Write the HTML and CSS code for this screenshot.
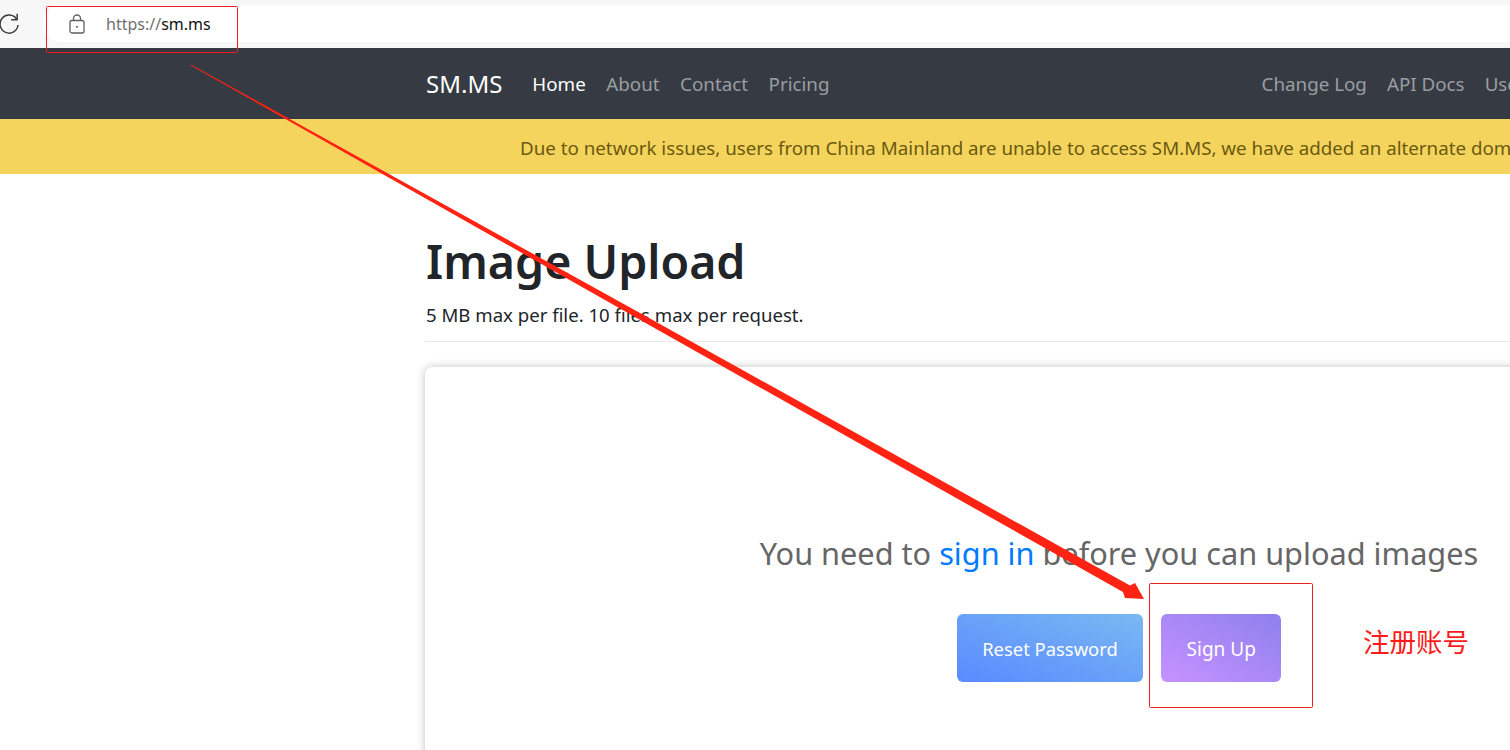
FILE: index.html
```html
<!DOCTYPE html>
<html lang="en">
<head>
  <meta charset="UTF-8" />
  <title>SM.MS - Image Upload</title>
  <link rel="stylesheet" href="styles.css">
</head>
<body>
  <div class="toolbar">
    <svg class="reload" width="22" height="22" viewBox="0 0 22 22" fill="none" stroke="#3c3c3c" stroke-width="1.5">
      <path d="M17.6 7.2A9 9 0 1 0 19 13" />
      <path d="M18.2 1.8v6h-6" stroke-linejoin="round" />
    </svg>
    <div class="address">
      <svg class="lock" width="16" height="20" viewBox="0 0 16 20" fill="none" stroke="#5f5f5f" stroke-width="1.3">
        <rect x="1" y="6.5" width="14" height="12.5" rx="2" />
        <path d="M4.5 6.5V4.5a3.5 3.5 0 0 1 7 0v2" />
        <circle cx="8" cy="12.8" r="1" fill="#5f5f5f" stroke="none" />
      </svg>
      <span class="url"><span class="scheme">https://</span>sm.ms</span>
    </div>
  </div>

  <nav class="navbar">
    <a class="brand" href="#">SM.MS</a>
    <ul class="nav-left">
      <li><a class="active" href="#">Home</a></li>
      <li><a href="#">About</a></li>
      <li><a href="#">Contact</a></li>
      <li><a href="#">Pricing</a></li>
    </ul>
    <ul class="nav-right">
      <li><a href="#">Change Log</a></li>
      <li><a href="#">API Docs</a></li>
      <li><a href="#">User</a></li>
    </ul>
  </nav>

  <div class="notice">Due to network issues, users from China Mainland are unable to access SM.MS, we have added an alternate domain.</div>

  <main class="content">
    <h1>Image Upload</h1>
    <p class="lead">5 MB max per file. 10 files max per request.</p>
    <hr />
    <section class="card">
      <div class="login-tip">You need to <a href="#">sign in</a> before you can upload images</div>
      <div class="actions">
        <a class="btn btn-reset" href="#">Reset Password</a>
        <a class="btn btn-signup" href="#">Sign Up</a>
        <span class="note">注册账号</span>
      </div>
    </section>
  </main>

  <svg class="markup" width="1510" height="750" viewBox="0 0 1510 750">
    <rect x="46.5" y="6.5" width="191" height="46" rx="1" fill="none" stroke="#f01f1f" />
    <rect x="1149.5" y="583.5" width="163" height="124" rx="1" fill="none" stroke="#e8201f" />
    <polygon points="191,64.5 650,318.5 1130,585.5 1135,583 1144,599 1125,598 1123,592 650,325.5 191,65.5" fill="#ff2313" />
  </svg>
</body>
</html>
```

FILE: styles.css
```css
html, body {
  margin: 0;
  height: 750px;
  overflow: hidden;
  background: #fff;
}

body {
  position: relative;
  font-family: "Noto Sans", "Noto Sans CJK SC", sans-serif;
  color: #212529;
}

a {
  text-decoration: none;
}

ul {
  list-style: none;
  margin: 0;
  padding: 0;
}

.toolbar {
  display: flex;
  height: 48px;
  padding-top: 5px;
  box-sizing: border-box;
  background: #f7f7f7;
}

.reload {
  flex: none;
  margin: 7px 0 0 -1px;
}

.address {
  flex: 1;
  display: flex;
  align-items: center;
  height: 37px;
  margin-left: 22px;
  background: #fff;
  border-radius: 18px 0 0 18px;
}

.lock {
  margin-left: 26px;
}

.url {
  margin-left: 21px;
  font-size: 16px;
  color: #111;
}

.scheme {
  color: #6f6f6f;
}

.navbar {
  display: flex;
  align-items: center;
  height: 71px;
  padding-left: 426px;
  background: #363b43;
  white-space: nowrap;
}

.brand {
  font-size: 24px;
  color: #fff;
}

.nav-left, .nav-right {
  display: flex;
  gap: 20px;
  font-size: 18.8px;
}

.nav-left {
  gap: 20.5px;
  margin-left: 30px;
}

.nav-right {
  margin-left: 432px;
}

.navbar li a {
  color: #9a9da1;
}

.navbar li a.active {
  color: #fff;
}

.notice {
  height: 55px;
  padding-left: 520px;
  line-height: 58px;
  font-size: 18.75px;
  color: #6b5a10;
  background: #f4d45c;
  white-space: nowrap;
}

.content {
  width: 1388px;
  margin-left: 425px;
}

h1 {
  margin: 56px 0 0 1px;
  font-size: 46.5px;
  line-height: 62px;
  font-weight: 600;
}

.lead {
  margin: 10px 0 0 1px;
  font-size: 18.6px;
  line-height: 26px;
}

hr {
  margin: 13px 0 0;
  border: 0;
  border-top: 1px solid #e8e8e8;
}

.card {
  height: 500px;
  margin-top: 25px;
  padding-top: 165px;
  box-sizing: border-box;
  background: #fff;
  border-radius: 8px;
  box-shadow: 0 0 8px rgba(0, 0, 0, 0.25);
  text-align: center;
}

.login-tip {
  font-size: 30.7px;
  line-height: 42px;
  color: #666;
}

.login-tip a {
  color: #007bff;
}

.actions {
  position: relative;
  display: flex;
  justify-content: center;
  gap: 18px;
  margin-top: 40px;
}

.btn {
  display: flex;
  align-items: center;
  height: 68px;
  padding: 0 25.4px;
  box-sizing: border-box;
  border-radius: 6px;
  font-size: 19px;
  color: #fff;
}

.btn-reset {
  font-size: 18.4px;
  background: linear-gradient(to top right, #5a8aff, #7ab8f2);
}

.btn-signup {
  padding-top: 2px;
  background: linear-gradient(to top right, #c792ff, #8d80ee);
}

.note {
  position: absolute;
  left: 938px;
  top: 7px;
  font-size: 26.5px;
  color: #ff1a1a;
}

.markup {
  position: absolute;
  left: 0;
  top: 0;
}
```
